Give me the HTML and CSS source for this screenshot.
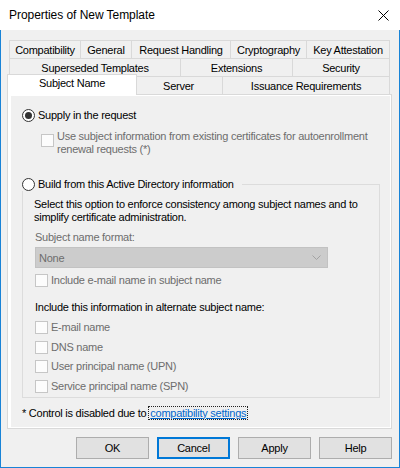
FILE: index.html
```html
<!DOCTYPE html>
<html>
<head>
<meta charset="utf-8">
<link rel="stylesheet" href="styles.css">
</head>
<body>
<div class="window">
  <div class="titlebar">
    <span class="title">Properties of New Template</span>
    <svg class="close" width="11" height="11" viewBox="0 0 11 11"><path d="M0.5 0.5 L10.5 10.5 M10.5 0.5 L0.5 10.5" stroke="#000" stroke-width="1" fill="none"/></svg>
  </div>
  <div class="dialog">
    <div class="tabs">
      <div class="tab-row">
        <div class="tab w-compat">Compatibility</div>
        <div class="tab w-general">General</div>
        <div class="tab w-request">Request Handling</div>
        <div class="tab w-crypto">Cryptography</div>
        <div class="tab w-key">Key Attestation</div>
      </div>
      <div class="tab-row">
        <div class="tab w-super">Superseded Templates</div>
        <div class="tab w-ext">Extensions</div>
        <div class="tab w-sec">Security</div>
      </div>
      <div class="tab-row">
        <div class="tab selected w-subject">Subject Name</div>
        <div class="tab w-server">Server</div>
        <div class="tab w-issue">Issuance Requirements</div>
      </div>
    </div>
    <div class="panel">
      <div class="page">
        <div class="option">
          <span class="radio checked"></span>
          <span class="label">Supply in the request</span>
        </div>
        <div class="check-row sub">
          <span class="checkbox"></span>
          <span class="label disabled">Use subject information from existing certificates for autoenrollment<br>renewal requests (*)</span>
        </div>
        <fieldset class="group">
          <legend class="group-title">
            <span class="radio"></span>
            <span class="label">Build from this Active Directory information</span>
          </legend>
          <p class="hint">Select this option to enforce consistency among subject names and to<br>simplify certificate administration.</p>
          <div class="field-label disabled">Subject name format:</div>
          <div class="combo">
            <span class="combo-value">None</span>
            <svg class="chevron" width="9" height="5" viewBox="0 0 9 5"><path d="M0.5 0.5 L4.5 4.5 L8.5 0.5" stroke="#a2a2a2" stroke-width="1" fill="none"/></svg>
          </div>
          <div class="check-row email-row">
            <span class="checkbox"></span>
            <span class="label disabled">Include e-mail name in subject name</span>
          </div>
          <div class="alt-title">Include this information in alternate subject name:</div>
          <div class="alt-list">
            <div class="check-row"><span class="checkbox"></span><span class="label disabled">E-mail name</span></div>
            <div class="check-row"><span class="checkbox"></span><span class="label disabled">DNS name</span></div>
            <div class="check-row"><span class="checkbox"></span><span class="label disabled">User principal name (UPN)</span></div>
            <div class="check-row"><span class="checkbox"></span><span class="label disabled">Service principal name (SPN)</span></div>
          </div>
        </fieldset>
        <div class="footnote">* Control is disabled due to <a class="link">compatibility settings</a></div>
      </div>
    </div>
    <div class="buttons">
      <button class="btn">OK</button>
      <button class="btn default">Cancel</button>
      <button class="btn">Apply</button>
      <button class="btn">Help</button>
    </div>
  </div>
</div>
</body>
</html>
```
FILE: styles.css
```css
* { box-sizing: border-box; }
body {
  margin: 0;
  width: 400px;
  height: 468px;
  font-family: "Liberation Sans", Arial, sans-serif;
  font-size: 11px;
  letter-spacing: -0.25px;
  color: #000;
  background: #fff;
}
.window {
  width: 400px;
  height: 468px;
  display: flex;
  flex-direction: column;
}
.titlebar {
  height: 30px;
  flex: none;
  background: #fff;
  display: flex;
  align-items: center;
  padding: 0 11px 0 9px;
}
.title {
  flex: 1;
  font-size: 12px;
  letter-spacing: -0.05px;
}
.close { display: block; }
.dialog {
  flex: 1;
  background: #f0f0f0;
  border: 1px solid #1883d7;
  border-top: none;
  padding: 10px 7px 0 6px;
  display: flex;
  flex-direction: column;
}
.tabs { margin-left: 2px; }
.tab-row {
  display: flex;
  align-items: flex-start;
  height: 18px;
}
.tab {
  flex: none;
  height: 18px;
  border: 1px solid #d9d9d9;
  border-bottom: none;
  margin-right: -1px;
  padding-top: 2px;
  line-height: 14px;
  text-align: center;
  white-space: nowrap;
  background: #f0f0f0;
}
.tab.selected {
  position: relative;
  z-index: 2;
  background: #fff;
  height: 21px;
  margin-top: -2px;
  margin-left: -2px;
  margin-right: -3px;
  padding-top: 1px;
}
.w-compat { width: 72px; }
.w-general { width: 52px; }
.w-request { width: 100px; }
.w-crypto { width: 77px; }
.w-key { width: 84px; }
.w-super { width: 172px; }
.w-ext { width: 113px; }
.w-sec { width: 98px; }
.w-subject { width: 130px; }
.w-server { width: 89px; }
.w-issue { width: 168px; }

.panel {
  width: 385px;
  height: 335px;
  flex: none;
  border: 1px solid #d9d9d9;
  background: #fff;
  padding: 1px 1px 1px 3px;
  display: flex;
}
.page {
  flex: 1;
  background: #f0f0f0;
  padding: 13px 0 0 11px;
}
.option, .group-title {
  display: flex;
  align-items: center;
  gap: 3px;
  height: 13px;
  line-height: 13px;
}
.label { line-height: 13px; white-space: nowrap; }
.disabled { color: #6d6d6d; }
.radio {
  flex: none;
  width: 13px;
  height: 13px;
  border: 1px solid #333;
  border-radius: 50%;
  background: #fff;
  display: grid;
  place-items: center;
}
.radio.checked::after {
  content: "";
  width: 7px;
  height: 7px;
  border-radius: 50%;
  background: #333;
}
.check-row {
  display: flex;
  align-items: center;
  gap: 3px;
  height: 13px;
}
.checkbox {
  flex: none;
  width: 13px;
  height: 13px;
  border: 1px solid #c6c6c6;
  background: #fcfcfc;
}
.check-row.sub {
  height: auto;
  align-items: flex-start;
  margin: 8px 0 0 19px;
}
.check-row.sub .checkbox { margin-top: 4px; }

.group {
  margin: 22px 0 0 0;
  width: 358px;
  border: 1px solid #dcdcdc;
  padding: 7px 0 4px 12px;
  min-width: 0;
}
.group-title {
  margin-left: -13px;
  padding: 0 8px 0 0;
}
.hint {
  margin: 0 0 0 -1px;
  line-height: 13px;
  white-space: nowrap;
}
.field-label {
  margin-top: 7px;
  line-height: 13px;
}
.combo {
  margin-top: 3px;
  width: 293px;
  height: 21px;
  background: #cccccc;
  border: 1px solid #c2c2c2;
  display: flex;
  align-items: center;
  justify-content: space-between;
  padding: 0 6px 0 3px;
}
.combo-value { color: #6d6d6d; }
.chevron { display: block; }
.email-row { margin-top: 6px; }
.alt-title {
  margin-top: 14px;
  line-height: 13px;
}
.alt-list {
  margin-top: 7px;
  display: flex;
  flex-direction: column;
  gap: 6.5px;
}
.footnote {
  margin-top: 9px;
  line-height: 13px;
  white-space: nowrap;
}
.link {
  color: #0066cc;
  text-decoration: underline;
  outline: 1px dotted #222;
  outline-offset: 0;
  padding: 0 1px;
}
.buttons {
  display: flex;
  justify-content: flex-end;
  gap: 8px;
  margin-top: 8px;
}
.btn {
  width: 73px;
  height: 22px;
  border: 1px solid #adadad;
  background: #e1e1e1;
  font-family: "Liberation Sans", Arial, sans-serif;
  font-size: 11px;
  letter-spacing: -0.25px;
  color: #000;
  padding: 0;
}
.btn.default { border: 2px solid #0078d7; }
```
